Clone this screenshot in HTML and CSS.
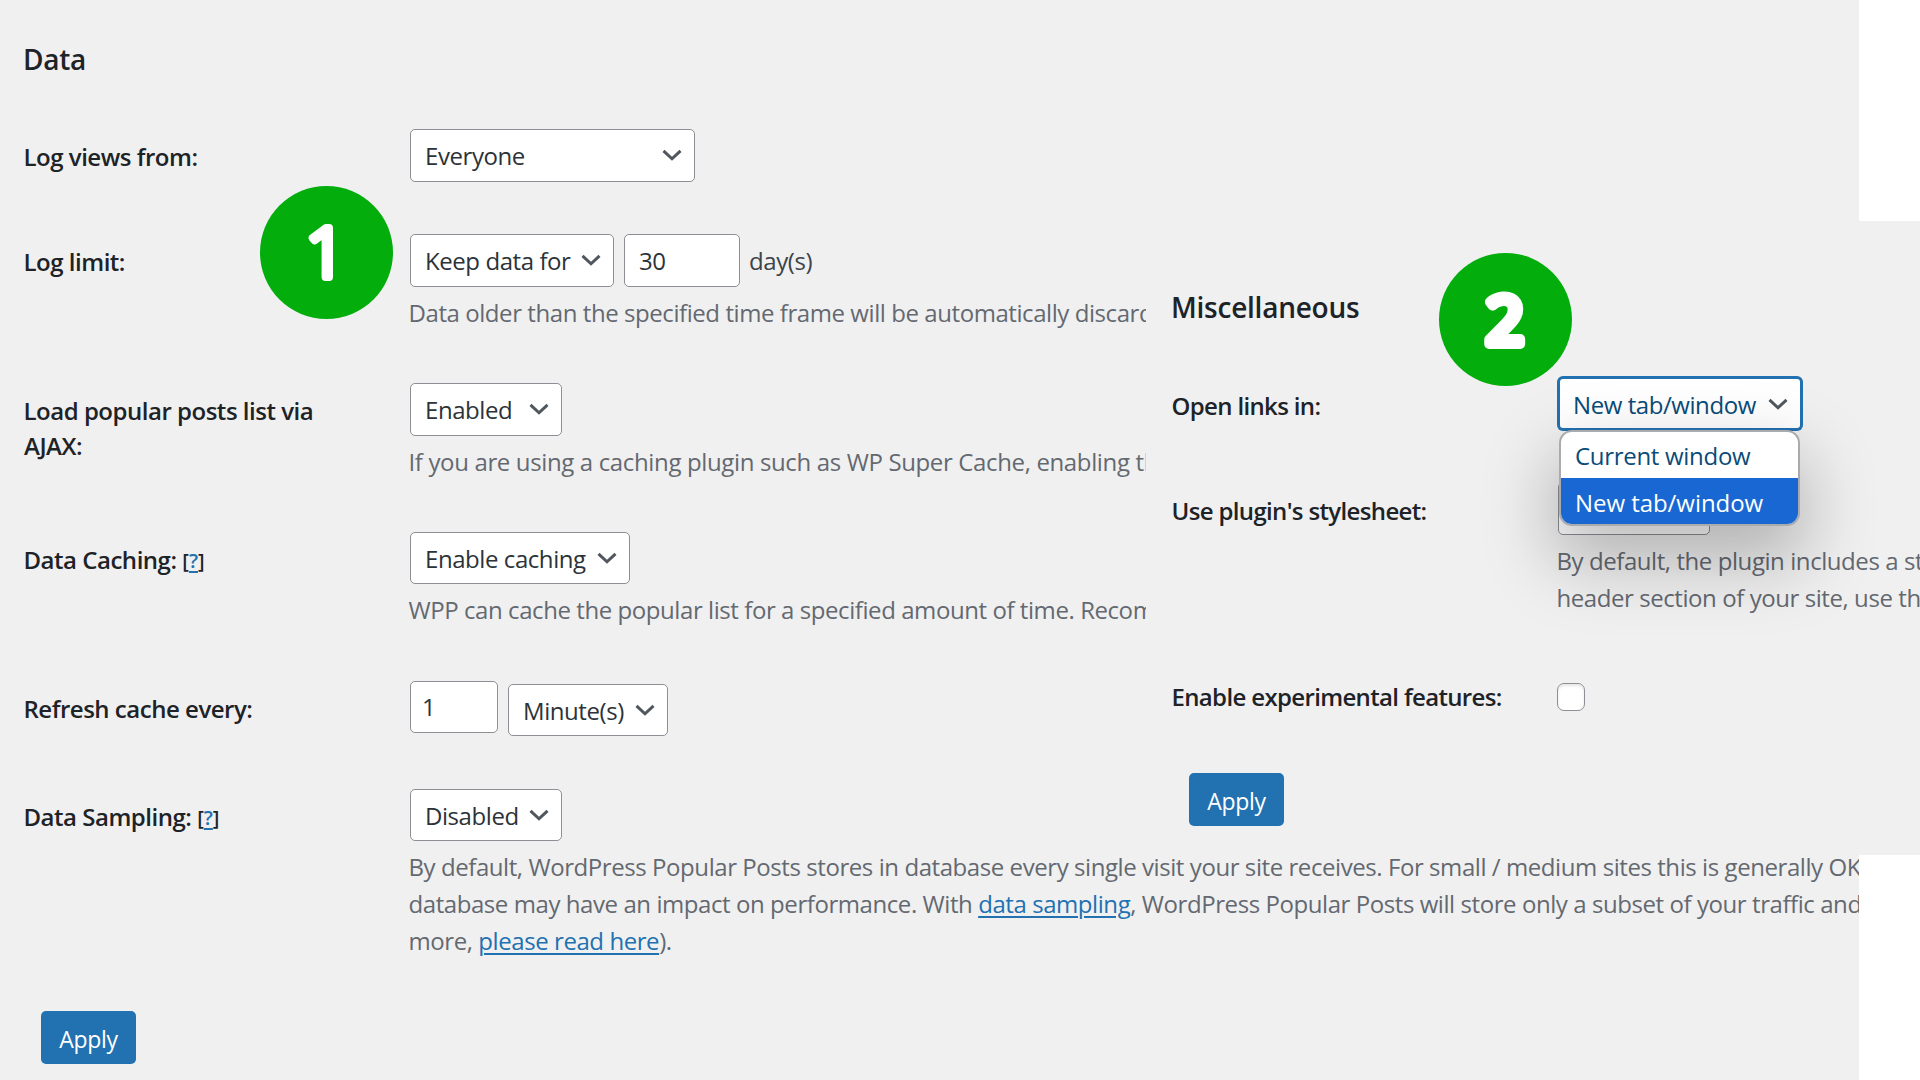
FILE: index.html
```
<!DOCTYPE html>
<html lang="en">

<head>
    <meta charset="UTF-8">
    <meta name="viewport" content="width=device-width, initial-scale=1.0">
    <title>WordPress Popular Posts - Settings</title>
    <link rel="stylesheet" href="styles.css">
</head>

<body>
    <!-- chevron shared by all the selects -->
    <svg class="sprite">
        <symbol id="chevron" viewBox="0 0 20 12">
            <path d="M1.5 1.8 L10 9.8 L18.5 1.8" />
        </symbol>
    </svg>

    <section class="panel data">
        <h3>Data</h3>
        <div class="row">
            <label>Log views from:</label>
            <div class="field">
                <div class="select everyone">
                    <select>
                        <option>Everyone</option>
                    </select>
                    <svg class="chevron"><use href="#chevron" /></svg>
                </div>
            </div>
        </div>
        <div class="row">
            <label>Log limit:</label>
            <div class="field">
                <div class="controls">
                    <div class="select keep">
                        <select>
                            <option>Keep data for</option>
                        </select>
                        <svg class="chevron"><use href="#chevron" /></svg>
                    </div>
                    <input class="days" type="text" value="30">
                    <span class="unit">day(s)</span>
                </div>
                <p>Data older than the specified time frame will be automatically discarded.</p>
            </div>
            <svg class="step step-one" viewBox="0 0 133 133">
                <text x="46" y="91">1</text>
            </svg>
        </div>
        <div class="row">
            <label>Load popular posts list via AJAX:</label>
            <div class="field">
                <div class="select short">
                    <select>
                        <option>Enabled</option>
                        <option>Disabled</option>
                    </select>
                    <svg class="chevron"><use href="#chevron" /></svg>
                </div>
                <p class="ajax-note">If you are using a caching plugin such as WP Super Cache, enabling this</p>
            </div>
        </div>
        <div class="row">
            <label>Data Caching: <small>[<a href="#">?</a>]</small></label>
            <div class="field">
                <div class="select caching">
                    <select>
                        <option>Enable caching</option>
                    </select>
                    <svg class="chevron"><use href="#chevron" /></svg>
                </div>
                <p>WPP can cache the popular list for a specified amount of time. Recommended</p>
            </div>
        </div>
        <div class="row">
            <label>Refresh cache every:</label>
            <div class="field">
                <div class="controls">
                    <input class="interval" type="text" value="1">
                    <div class="select minutes">
                        <select>
                            <option>Minute(s)</option>
                        </select>
                        <svg class="chevron"><use href="#chevron" /></svg>
                    </div>
                </div>
            </div>
        </div>
        <div class="row">
            <label>Data Sampling: <small>[<a href="#">?</a>]</small></label>
            <div class="field">
                <div class="select short sampling">
                    <select>
                        <option>Disabled</option>
                        <option>Enabled</option>
                    </select>
                    <svg class="chevron"><use href="#chevron" /></svg>
                </div>
                <p>By default, WordPress Popular Posts stores in database every single visit your site receives. For small / medium sites this is generally OK,<br>
                    database may have an impact on performance. With <a href="#">data sampling</a>, WordPress Popular Posts will store only a subset of your traffic and<br>
                    more, <a href="#">please read here</a>).</p>
            </div>
        </div>
        <button>Apply</button>
    </section>

    <section class="panel misc">
        <h3>Miscellaneous</h3>
        <div class="row">
            <label>Open links in:</label>
            <div class="field">
                <div class="select target focused">
                    <select>
                        <option>New tab/window</option>
                    </select>
                    <svg class="chevron"><use href="#chevron" /></svg>
                    <ul class="menu">
                        <li>Current window</li>
                        <li class="selected">New tab/window</li>
                    </ul>
                </div>
            </div>
            <svg class="step step-two" viewBox="0 0 133 133">
                <text x="47" y="90.5">2</text>
            </svg>
        </div>
        <div class="row">
            <label>Use plugin's stylesheet:</label>
            <div class="field">
                <div class="select short">
                    <select></select>
                </div>
                <p>By default, the plugin includes a stylesheet<br>
                    header section of your site, use this</p>
            </div>
        </div>
        <div class="row">
            <label>Enable experimental features:</label>
            <div class="field">
                <input type="checkbox">
            </div>
        </div>
        <button>Apply</button>
    </section>
</body>

</html>
```
FILE: styles.css
```
* {
    box-sizing: border-box;
}

body {
    position: relative;
    width: 1920px;
    height: 1080px;
    margin: 0;
    overflow: hidden;
    background-color: #fff;
    font-family: "Open Sans", "Noto Sans", sans-serif;
    font-size: 24px;
    letter-spacing: -0.43px;
    color: #3c434a;
}

.sprite {
    display: none;
}

.panel {
    display: grid;
    background-color: #f0f0f1;
    overflow: hidden;
}

.data {
    width: 1859px;
    height: 1080px;
    padding-left: 24px;
    grid-template-rows: 129px 105px 149px 149px 149px 108px 222px 53px;
}

/* sits on top of the data panel and cuts its long lines */
.misc {
    position: absolute;
    top: 221px;
    left: 1146px;
    width: 774px;
    height: 634px;
    padding-left: 26px;
    grid-template-rows: 156px 105px 186px 105px 53px;
}

h3 {
    margin: 0 0 0 -1px;
    padding-top: 41px;
    font-size: 28px;
    font-weight: 600;
    line-height: 36px;
    letter-spacing: -0.25px;
    color: #1d2327;
}

.misc h3 {
    padding-top: 68px;
}

.row {
    position: relative;
    display: flex;
}

.row label {
    flex: none;
    width: 386px;
    padding: 10px 60px 0 0;
    font-weight: 550;
    line-height: 35px;
    letter-spacing: -0.48px;
    text-indent: -0.5px;
    color: #1d2327;
}

.misc .row label {
    padding: 11px 0 0;
    letter-spacing: -0.65px;
}

label small {
    position: relative;
    top: -1px;
    font-size: 20px;
    font-weight: 550;
    letter-spacing: 0;
}

a {
    color: #2271b1;
    text-decoration-thickness: 2px;
    text-underline-offset: 3px;
}

.field p {
    margin: 7px 0 0 -1.5px;
    line-height: 37px;
    white-space: nowrap;
    color: #646970;
}

.field .ajax-note {
    letter-spacing: -0.36px;
}

.controls {
    display: flex;
    gap: 10px;
}

.unit {
    margin-left: -1px;
    line-height: 53px;
}

.select {
    position: relative;
    height: 53px;
}

select,
input {
    appearance: none;
    margin: 0;
    border: 1px solid #8c8f94;
    border-radius: 5px;
    background-color: #fff;
    font: inherit;
    letter-spacing: inherit;
    color: #2c3338;
}

select {
    display: block;
    width: 100%;
    height: 100%;
    padding: 0 0 0 14px;
}

input {
    height: 53px;
    padding: 0 14px;
}

.chevron {
    position: absolute;
    top: 20px;
    right: 13px;
    width: 20px;
    height: 12px;
    fill: none;
    stroke: #50575e;
    stroke-width: 3;
}

.everyone {
    width: 285px;
}

.keep {
    width: 204px;
}

.days {
    width: 116px;
}

.short {
    width: 152px;
}

.caching {
    width: 220px;
    height: 52px;
}

.sampling {
    height: 52px;
}

.interval {
    width: 88px;
    height: 52px;
    padding: 0 11px 2px;
}

.minutes {
    width: 160px;
    height: 52px;
    margin-top: 3px;
}

.target {
    width: 244px;
}

.focused select {
    padding-top: 2px;
    border: 2px solid #2271b1;
    box-shadow: 0 0 0 1px #2271b1;
    padding-left: 13px;
    color: #0a4b78;
}

.focused .chevron {
    top: 21px;
    right: 14px;
}

.menu {
    position: absolute;
    z-index: 1;
    top: 53px;
    left: 1px;
    width: 241px;
    margin: 0;
    padding: 0;
    overflow: hidden;
    list-style: none;
    border: 2px solid #a9abae;
    border-radius: 13px;
    background-color: #fff;
    box-shadow: 0 30px 70px 6px rgba(0, 0, 0, 0.26);
    color: #0a4b78;
}

.menu li {
    height: 46px;
    padding-left: 14px;
    line-height: 48px;
    letter-spacing: -0.3px;
}

.menu .selected {
    background-color: #1967d2;
    line-height: 50px;
    letter-spacing: -0.05px;
    color: #fff;
}

input[type="checkbox"] {
    width: 28px;
    height: 28px;
    margin: 15px 0 0 -1px;
    padding: 0;
    border-radius: 7px;
    box-shadow: inset 0 2px 3px rgba(0, 0, 0, 0.1);
}

button {
    justify-self: start;
    width: 95px;
    height: 53px;
    margin-left: 17px;
    padding: 2px 0 0;
    border: none;
    border-radius: 5px;
    background-color: #2271b1;
    font-family: inherit;
    font-size: 23px;
    letter-spacing: -0.3px;
    color: #fff;
}

/* numbered step badges */
.step {
    position: absolute;
    width: 133px;
    height: 133px;
    border-radius: 50%;
    background-color: #02ad0c;
    fill: #fff;
    stroke: #fff;
    stroke-linejoin: round;
}

.step-one {
    top: -48px;
    left: 236px;
    font-size: 69px;
    font-weight: 300;
    stroke-width: 8px;
}

.step-two {
    top: -124px;
    left: 267px;
    font-size: 66px;
    font-weight: 400;
    stroke-width: 10px;
}
```
